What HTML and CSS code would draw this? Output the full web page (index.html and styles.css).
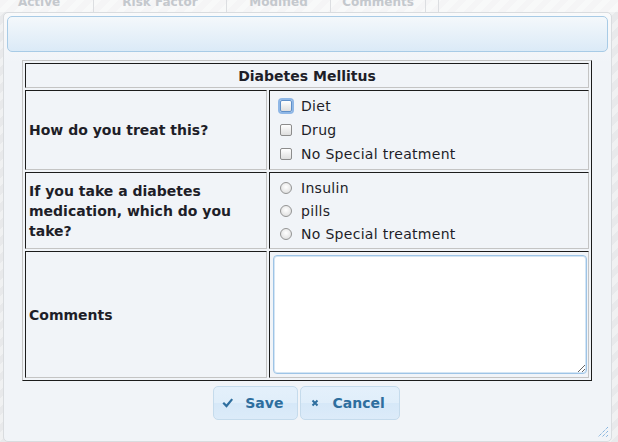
FILE: index.html
```html
<!DOCTYPE html>
<html>
<head>
<meta charset="utf-8">
<link rel="stylesheet" href="styles.css">
</head>
<body>
<div class="bg-head">
  <div class="bg-col c1">Active</div>
  <div class="bg-col c2">Risk Factor</div>
  <div class="bg-col c3">Modified</div>
  <div class="bg-col c4">Comments</div>
  <div class="bg-col c5"></div>
</div>

<div class="dialog">
  <div class="titlebar"></div>
  <div class="content">
    <table class="form">
      <tr class="r-head"><th colspan="2">Diabetes Mellitus</th></tr>
      <tr class="r-treat">
        <td class="q">How do you treat this?</td>
        <td class="a">
          <label class="opt cbopt"><input type="checkbox" class="cb focus">Diet</label>
          <label class="opt cbopt"><input type="checkbox" class="cb">Drug</label>
          <label class="opt cbopt"><input type="checkbox" class="cb">No Special treatment</label>
        </td>
      </tr>
      <tr class="r-med">
        <td class="q">If you take a diabetes medication, which do you take?</td>
        <td class="a">
          <label class="opt rdopt"><input type="radio" name="med" class="rd">Insulin</label>
          <label class="opt rdopt"><input type="radio" name="med" class="rd">pills</label>
          <label class="opt rdopt"><input type="radio" name="med" class="rd">No Special treatment</label>
        </td>
      </tr>
      <tr class="r-comm">
        <td class="q">Comments</td>
        <td class="a"><textarea class="comments"></textarea></td>
      </tr>
    </table>
  </div>
  <div class="buttonpane">
    <button class="btn">
      <span class="ico"><svg width="16" height="16" viewBox="0 0 16 16"><path d="M4 8.5 L6.5 11 L11.5 5" fill="none" stroke="#2e6e9e" stroke-width="2.2" stroke-linecap="square"/></svg></span>
      <span class="lbl">Save</span>
    </button>
    <button class="btn">
      <span class="ico"><svg width="16" height="16" viewBox="0 0 16 16"><path d="M5.5 5.5 L10.5 10.5 M10.5 5.5 L5.5 10.5" fill="none" stroke="#2e6e9e" stroke-width="2"/></svg></span>
      <span class="lbl">Cancel</span>
    </button>
  </div>
  <div class="grip"><svg width="12" height="12" viewBox="0 0 12 12"><path d="M11 1 L1 11 M11 5 L5 11 M11 9 L9 11" fill="none" stroke="#5b9bd5" stroke-width="1" stroke-dasharray="1 1"/></svg></div>
</div>
</body>
</html>
```

FILE: styles.css
```css
html, body {
  margin: 0;
  padding: 0;
}
body {
  width: 618px;
  height: 442px;
  overflow: hidden;
  position: relative;
  background: repeating-linear-gradient(135deg, #e8e9eb 0 6px, #f0f1f2 6px 12px);
  font-family: "DejaVu Sans", Verdana, sans-serif;
  color: #1e1e28;
}

/* faded page header behind the dialog */
.bg-head {
  display: flex;
  height: 17px;
  margin-top: -5px;
  background: rgba(255, 255, 255, 0.55);
}
.bg-col {
  box-sizing: border-box;
  border-right: 1px solid #dcdee1;
  font-size: 12px;
  font-weight: bold;
  line-height: 14px;
  color: #c4c8cd;
  text-align: center;
  white-space: nowrap;
}
.c1 { width: 94px; padding-right: 15px; }
.c2 { width: 133px; }
.c3 { width: 104px; }
.c4 { width: 95px; }
.c5 { width: 13px; }

/* dialog */
.dialog {
  position: absolute;
  left: 3px;
  top: 12px;
  width: 609px;
  height: 430px;
  box-sizing: border-box;
  padding: 3px;
  border: 1px solid #d9dcdf;
  border-radius: 5px;
  background: linear-gradient(#f9fafb, #f1f4f8 50px);
}
.titlebar {
  height: 36px;
  box-sizing: border-box;
  border: 1px solid #a8cbe6;
  border-radius: 5px;
  background: linear-gradient(#f4f8fb, #dbeaf7);
}
.content {
  padding: 8px 15px 0 15px;
}

.form {
  width: 570px;
  border-collapse: separate;
  border-spacing: 2px;
  border: 1px solid;
  border-color: #c4c4c4 #1c1c1c #1c1c1c #c4c4c4;
  font-size: 14px;
}
.form th,
.form td {
  border: 1px solid;
  border-color: #1c1c1c #c4c4c4 #c4c4c4 #1c1c1c;
  padding: 0 3px;
  vertical-align: middle;
}
.form th {
  height: 23px;
  font-weight: bold;
  text-align: center;
  line-height: 18px;
}
.form td.q {
  width: 235px;
  font-weight: bold;
  line-height: 20px;
}
.form td.a {
  padding: 0 1px 0 10px;
}
.r-treat td { height: 78px; }
.r-med td { height: 75px; }
.r-comm td { height: 125px; }

.opt {
  display: flex;
  align-items: center;
  letter-spacing: 0.3px;
}
.cbopt { height: 24px; }
.rdopt { height: 23px; }

.cb,
.rd {
  appearance: none;
  -webkit-appearance: none;
  width: 12px;
  height: 12px;
  margin: 0 9px 0 0;
  box-sizing: border-box;
  border: 1px solid #8c8c8c;
  flex: none;
}
.cb {
  border-radius: 2px;
  background: linear-gradient(#ffffff, #dedede);
}
.cb.focus {
  border-color: #5f8fc8;
  box-shadow: 0 0 0 2px #8fb7e6;
}
.rd {
  border-radius: 50%;
  border-color: #949494;
  background: radial-gradient(circle at 50% 40%, #ffffff, #d8d8d8);
}

.comments {
  display: block;
  width: 314px;
  height: 119px;
  box-sizing: border-box;
  margin: 0 0 0 -7px;
  border: 1px solid #9ec4e6;
  border-radius: 4px;
  box-shadow: inset 0 0 0 1px #d4e5f4;
  background: #fff;
  font-family: inherit;
  font-size: 13px;
}

.buttonpane {
  display: flex;
  justify-content: center;
  gap: 2px;
  margin-top: 5px;
  padding-right: 2px;
}
.btn {
  display: flex;
  align-items: center;
  gap: 9px;
  height: 34px;
  box-sizing: border-box;
  padding: 0 14px 0 6px;
  border: 1px solid #c5dbec;
  border-radius: 5px;
  background: linear-gradient(#e4f0fb 0%, #e0eefa 50%, #d6e8f8 51%, #dcebf9 100%);
  color: #2e6e9e;
  font-family: "DejaVu Sans", Verdana, sans-serif;
  font-size: 14px;
  font-weight: bold;
}
.ico {
  display: block;
  width: 16px;
  height: 16px;
}
.ico svg { display: block; }

.grip {
  position: absolute;
  right: 2px;
  bottom: 3px;
  width: 12px;
  height: 12px;
}
.grip svg { display: block; }
```
